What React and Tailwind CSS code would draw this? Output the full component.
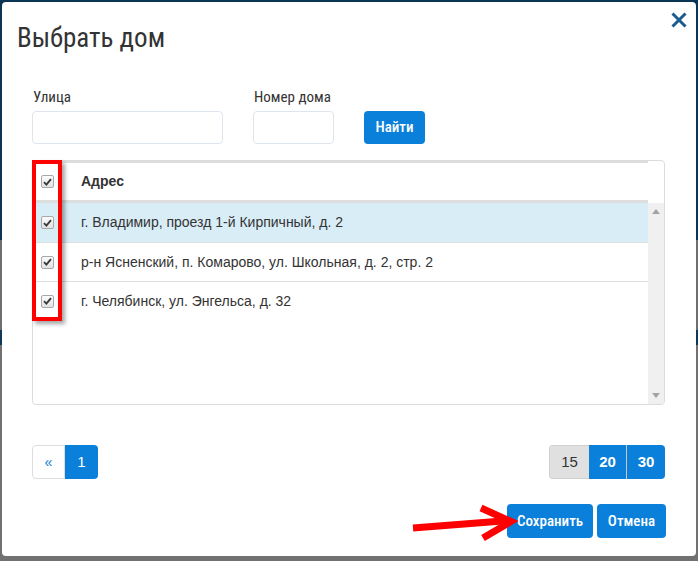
import React from 'react'

const cond = "font-['Roboto_Condensed','Liberation_Sans_Narrow',Roboto,sans-serif]"

const rows = [
  { address: 'г. Владимир, проезд 1-й Кирпичный, д. 2', active: true },
  { address: 'р-н Ясненский, п. Комарово, ул. Школьная, д. 2, стр. 2' },
  { address: 'г. Челябинск, ул. Энгельса, д. 32' },
]

function Check() {
  return (
    <span className="flex h-[13px] w-[13px] items-center justify-center rounded-[2px] border border-[#a8a8a8] bg-[linear-gradient(#fbfbfb,#e2e2e2)]">
      <svg width="9" height="8" viewBox="0 0 9 8">
        <path d="M1 4.2 L3.4 6.6 L8 1.2" fill="none" stroke="#3a3a3a" strokeWidth="1.9" />
      </svg>
    </span>
  )
}

function Btn({ children, className = '' }) {
  return (
    <button
      type="button"
      className={`flex items-center justify-center rounded-[4px] bg-[#0b80da] text-[15px] font-medium text-white ${cond} ${className}`}
    >
      {children}
    </button>
  )
}

export default function App() {
  return (
    <div className="h-[561px] w-[698px] bg-[linear-gradient(#0a3656_0,#0a3656_240px,#6e6e6e_240px,#6e6e6e_330px,#0d3a5a_330px,#0d3a5a_345px,#717171_345px)] pb-[5px] pl-[2px] pr-[2px] pt-[2px]">
      <div className="relative flex h-full flex-col rounded-[4px] bg-white">
        <div className="flex items-start justify-between">
          <h4 className={`pl-[15px] pt-[20px] text-[27px] leading-[32px] text-[#333] ${cond}`}>Выбрать дом</h4>
          <button type="button" className="mr-[8px] mt-[9px] p-[1px]" aria-label="Закрыть">
            <svg width="16" height="16" viewBox="0 0 16 16">
              <path d="M1.5 1.5 L14.5 14.5 M14.5 1.5 L1.5 14.5" stroke="#1b5c8e" strokeWidth="3" />
            </svg>
          </button>
        </div>

        <div className="flex flex-col px-[30px] pr-[31px]">
          <div className="mt-[34px] flex items-end gap-[30px]">
            <div className="flex flex-col">
              <label className={`pl-[1px] text-[15px] leading-[18px] text-[#333] ${cond}`}>Улица</label>
              <div className="mt-[5px] h-[33px] w-[191px] rounded-[4px] border border-[#dfe5ec]" />
            </div>
            <div className="flex flex-col">
              <label className={`pl-[1px] text-[15px] leading-[18px] text-[#333] ${cond}`}>Номер дома</label>
              <div className="mt-[5px] h-[33px] w-[81px] rounded-[4px] border border-[#dfe5ec]" />
            </div>
            <Btn className="h-[33px] w-[61px]">Найти</Btn>
          </div>

          <div className="relative mt-[16px]">
            <div className="flex h-[245px] flex-col overflow-hidden rounded-[4px] border border-[#dcdcdc] font-['Liberation_Sans',Arial,sans-serif] text-[14px] text-[#333]">
              <div className="flex">
                <div className="flex h-[42px] flex-1 items-center border-b-[3px] border-t-[2px] border-[#dddddd]">
                  <div className="w-[40px] pl-[8px]"><Check /></div>
                  <div className="pl-[8px] font-bold">Адрес</div>
                </div>
                <div className="w-[16px]" />
              </div>
              <div className="flex flex-1">
                <div className="flex-1">
                  {rows.map((r, i) => (
                    <div
                      key={i}
                      className={`flex h-[39px] items-center ${i > 0 ? 'border-t border-[#dddddd]' : ''} ${r.active ? 'bg-[#d9edf7]' : ''}`}
                    >
                      <div className="w-[40px] pl-[8px]"><Check /></div>
                      <div className="pl-[8px]">{r.address}</div>
                    </div>
                  ))}
                </div>
                <div className="flex w-[16px] flex-col items-center justify-between bg-[#f0f0f0] py-[6px]">
                  <svg width="8" height="5" viewBox="0 0 8 5"><path d="M0 5 L4 0 L8 5 Z" fill="#a3a3a3" /></svg>
                  <svg width="8" height="5" viewBox="0 0 8 5"><path d="M0 0 L8 0 L4 5 Z" fill="#a3a3a3" /></svg>
                </div>
              </div>
            </div>
            <div className="absolute left-0 top-0 h-[161px] w-[30px] border-[4px] border-[#ff0000] shadow-[3px_3px_4px_rgba(0,0,0,0.35)]" />
          </div>

          <div className="mt-[40px] flex items-center justify-between">
            <div className="flex h-[34px]">
              <div className="flex w-[33px] items-center justify-center rounded-l-[4px] border border-[#dddddd] text-[14px] text-[#0b80da] font-['Liberation_Sans',Arial,sans-serif]">«</div>
              <div className="flex w-[33px] items-center justify-center rounded-r-[4px] bg-[#0b80da] text-[15px] text-white font-['Liberation_Sans',Arial,sans-serif]">1</div>
            </div>
            <div className="flex h-[34px] overflow-hidden rounded-[4px] text-[15px] font-['Liberation_Sans',Arial,sans-serif]">
              <div className="flex w-[40px] items-center justify-center border border-r-0 border-[#d0d0d0] bg-[#e0e0e0] text-[#333]">15</div>
              <div className="flex w-[38px] items-center justify-center border-r border-[#c9c9c9] bg-[#0b80da] font-bold text-white">20</div>
              <div className="flex w-[38px] items-center justify-center bg-[#0b80da] font-bold text-white">30</div>
            </div>
          </div>

          <div className="-mr-[1px] mt-[25px] flex justify-end gap-[4px]">
            <Btn className="h-[34px] w-[86px]">Сохранить</Btn>
            <Btn className="h-[34px] w-[69px]">Отмена</Btn>
          </div>
        </div>

        <svg className="absolute left-[403px] top-[498px]" width="120" height="45" viewBox="0 0 120 45">
          <path d="M8 28 L104 20.5" stroke="#ff0000" strokeWidth="7" fill="none" />
          <path d="M76 8 L106 21.5 L78 38" stroke="#ff0000" strokeWidth="7" fill="none" strokeLinejoin="miter" />
        </svg>
      </div>
    </div>
  )
}
